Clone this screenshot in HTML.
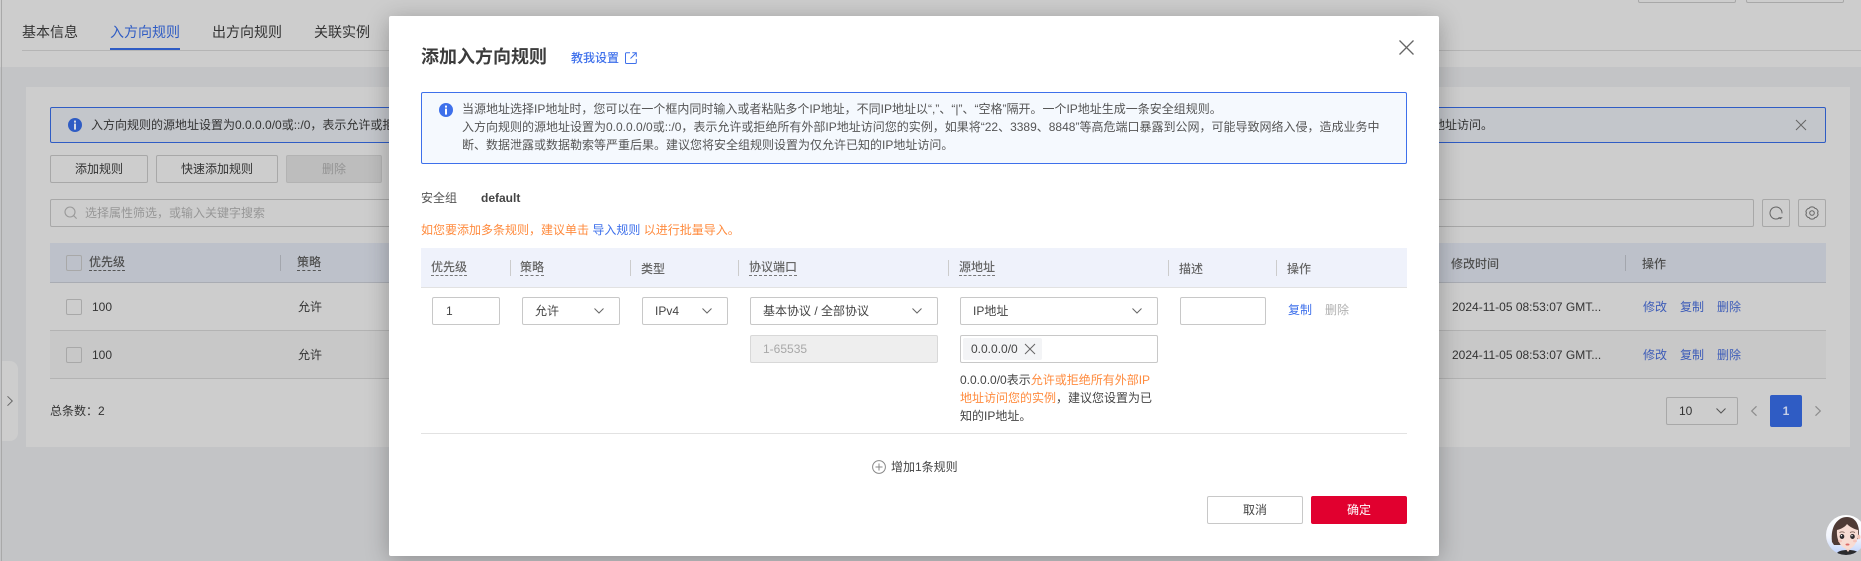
<!DOCTYPE html>
<html lang="zh">
<head>
<meta charset="utf-8">
<title>添加入方向规则</title>
<style>
html,body{margin:0;padding:0;width:1861px;height:561px;overflow:hidden;background:#c3c4c6}
body{position:relative;font:12px/18px "Liberation Sans","Noto Sans CJK SC",sans-serif;color:#333}
.a,.t,.b{position:absolute;box-sizing:border-box}
.t{white-space:nowrap;line-height:18px}
.b{text-align:center;border:1px solid #a8a8a8;border-radius:2px;line-height:26px;color:#333}
.h{font-weight:500;color:#505050}
.u{border-bottom:1px dashed #555;line-height:16px}
.mh{font-weight:500;color:#666}
.mu{border-bottom:1px dashed #777;line-height:16px}
.lk{color:#3d5cb8}
.in{position:absolute;box-sizing:border-box;border:1px solid #c8c8c8;border-radius:2px;background:#fff;height:28px;line-height:26px;color:#444}
.or{color:#ff8b3e}
svg{position:absolute;display:block;overflow:visible}
</style>
</head>
<body>
<!-- page background -->
<div class="a" style="left:0;top:0;width:1861px;height:67px;background:#cdcdcd"></div>
<div class="a" style="left:1px;top:0;width:1px;height:561px;background:#a9a9a9"></div>
<div class="a" style="left:1638px;top:-10px;width:98px;height:13px;border:1px solid #a8a8a8;border-radius:2px"></div>
<div class="a" style="left:1746px;top:-10px;width:98px;height:13px;border:1px solid #a8a8a8;border-radius:2px"></div>
<div class="a" style="left:22px;top:50px;width:1839px;height:1px;background:#b5b5b5"></div>
<div class="t" style="left:22px;top:23px;font-size:14px;color:#333">基本信息</div>
<div class="t" style="left:110px;top:23px;font-size:14px;color:#2f5cc4">入方向规则</div>
<div class="t" style="left:212px;top:23px;font-size:14px;color:#333">出方向规则</div>
<div class="t" style="left:314px;top:23px;font-size:14px;color:#333">关联实例</div>
<div class="a" style="left:110px;top:48px;width:70px;height:2px;background:#2f5cc4"></div>

<!-- card -->
<div class="a" style="left:26px;top:87px;width:1824px;height:360px;background:#cdcdcd"></div>
<div class="a" style="left:50px;top:107px;width:1776px;height:36px;background:#c3c6cb;border:1px solid #2f5cc4;border-radius:2px"></div>
<svg style="left:68px;top:118px" width="14" height="14" viewBox="0 0 14 14"><circle cx="7" cy="7" r="7" fill="#2f5cc4"/><rect x="6" y="2.6" width="2" height="2" fill="#d5d9e4"/><rect x="6" y="5.6" width="2" height="6" fill="#d5d9e4"/></svg>
<div class="t" style="left:91px;top:116px">入方向规则的源地址设置为0.0.0.0/0或::/0，表示允许或拒绝所有外部IP地址访问</div>
<div class="t" style="left:1433px;top:116px">地址访问。</div>
<svg style="left:1796px;top:120px" width="10" height="10" viewBox="0 0 10 10"><path d="M0 0L10 10M10 0L0 10" stroke="#666" stroke-width="1" fill="none"/></svg>

<div class="b" style="left:50px;top:155px;width:98px;height:28px">添加规则</div>
<div class="b" style="left:156px;top:155px;width:122px;height:28px">快速添加规则</div>
<div class="b" style="left:286px;top:155px;width:96px;height:28px;background:#bdbdbd;border-color:#b3b3b3;color:#939393">删除</div>

<div class="a" style="left:50px;top:199px;width:1704px;height:28px;border:1px solid #a8a8a8;border-radius:2px"></div>
<svg style="left:64px;top:206px" width="14" height="14" viewBox="0 0 14 14"><circle cx="6" cy="6" r="5" fill="none" stroke="#999" stroke-width="1.1"/><path d="M9.6 9.6L12.6 12.6" stroke="#999" stroke-width="1.1"/></svg>
<div class="t" style="left:85px;top:204px;color:#979797">选择属性筛选，或输入关键字搜索</div>
<div class="a" style="left:1762px;top:199px;width:28px;height:28px;border:1px solid #a8a8a8;border-radius:2px"></div>
<svg style="left:1769px;top:206px" width="14" height="14" viewBox="0 0 14 14"><path d="M10.9 11.6A6 6 0 1 1 13 7.4" fill="none" stroke="#666" stroke-width="1"/><path d="M9 11.2H13.800L11.400 13.400Z" fill="#666"/></svg>
<div class="a" style="left:1798px;top:199px;width:28px;height:28px;border:1px solid #a8a8a8;border-radius:2px"></div>
<svg style="left:1805px;top:206px" width="14" height="14" viewBox="0 0 14 14"><path d="M5 1.300Q7 .4 9 1.300Q9.800 2.700 11.300 2.700Q12.900 4.300 13.100 5.400Q12.200 7 13.100 8.600Q12.900 9.700 11.300 11.300Q9.800 11.300 9 12.700Q7 13.600 5 12.700Q4.200 11.300 2.700 11.300Q1.100 9.700 .9 8.600Q1.800 7 .9 5.400Q1.100 4.300 2.700 2.700Q4.200 2.700 5 1.300Z" fill="none" stroke="#666" stroke-width="1" stroke-linejoin="round"/><circle cx="7" cy="7" r="2.300" fill="none" stroke="#666"/></svg>

<!-- table -->
<div class="a" style="left:50px;top:243px;width:1776px;height:40px;background:#bdc1ca;border-bottom:1px solid #a9acb3"></div>
<div class="a" style="left:50px;top:331px;width:1776px;height:47px;background:#c8c8c8"></div>
<div class="a" style="left:50px;top:330px;width:1776px;height:1px;background:#b3b3b3"></div>
<div class="a" style="left:50px;top:378px;width:1776px;height:1px;background:#b3b3b3"></div>
<div class="a" style="left:66px;top:255px;width:16px;height:16px;border:1px solid #a8a8a8;border-radius:2px"></div>
<div class="a" style="left:66px;top:299px;width:16px;height:16px;border:1px solid #a8a8a8;border-radius:2px"></div>
<div class="a" style="left:66px;top:347px;width:16px;height:16px;border:1px solid #a8a8a8;border-radius:2px"></div>
<div class="t h u" style="left:89px;top:254px">优先级</div>
<div class="a" style="left:280px;top:255px;width:1px;height:16px;background:#a3a6ad"></div>
<div class="t h u" style="left:297px;top:254px">策略</div>
<div class="t h" style="left:1451px;top:255px">修改时间</div>
<div class="a" style="left:1625px;top:255px;width:1px;height:16px;background:#a3a6ad"></div>
<div class="t h" style="left:1642px;top:255px">操作</div>
<div class="t" style="left:92px;top:298px">100</div>
<div class="t" style="left:298px;top:298px">允许</div>
<div class="t" style="left:1452px;top:298px">2024-11-05 08:53:07 GMT...</div>
<div class="t lk" style="left:1643px;top:298px">修改</div>
<div class="t lk" style="left:1680px;top:298px">复制</div>
<div class="t lk" style="left:1717px;top:298px">删除</div>
<div class="t" style="left:92px;top:346px">100</div>
<div class="t" style="left:298px;top:346px">允许</div>
<div class="t" style="left:1452px;top:346px">2024-11-05 08:53:07 GMT...</div>
<div class="t lk" style="left:1643px;top:346px">修改</div>
<div class="t lk" style="left:1680px;top:346px">复制</div>
<div class="t lk" style="left:1717px;top:346px">删除</div>

<!-- pagination -->
<div class="t" style="left:50px;top:402px">总条数：2</div>
<div class="a" style="left:1666px;top:397px;width:72px;height:28px;border:1px solid #a8a8a8;border-radius:2px"></div>
<div class="t" style="left:1679px;top:402px">10</div>
<svg style="left:1716px;top:408px" width="10" height="6" viewBox="0 0 10 6"><path d="M.5 .5L5 5L9.5 .5" fill="none" stroke="#555" stroke-width="1"/></svg>
<svg style="left:1751px;top:406px" width="6" height="10" viewBox="0 0 6 10"><path d="M5.5 .3L.7 5L5.5 9.7" fill="none" stroke="#8c8c8c" stroke-width="1.2"/></svg>
<div class="a" style="left:1770px;top:395px;width:32px;height:32px;background:#2f5cc4;border-radius:2px;color:#c7cfe6;text-align:center;line-height:32px;font-weight:700">1</div>
<svg style="left:1815px;top:406px" width="6" height="10" viewBox="0 0 6 10"><path d="M.5 .3L5.3 5L.5 9.7" fill="none" stroke="#8c8c8c" stroke-width="1.2"/></svg>

<!-- sidebar toggle -->
<div class="a" style="left:2px;top:361px;width:16px;height:80px;background:#cdcdcd;border-radius:0 8px 8px 0"></div>
<svg style="left:7px;top:396px" width="6" height="10" viewBox="0 0 6 10"><path d="M.5 .3L5.3 5L.5 9.7" fill="none" stroke="#666" stroke-width="1"/></svg>

<!-- avatar -->
<svg style="left:1826px;top:515px" width="40" height="40" viewBox="0 0 40 40">
<defs>
<linearGradient id="g" x1="0" y1="0" x2="0" y2="1"><stop offset="0" stop-color="#fff"/><stop offset=".55" stop-color="#f2f5fd"/><stop offset="1" stop-color="#bcd0fb"/></linearGradient>
<clipPath id="c"><circle cx="20" cy="20" r="20"/></clipPath>
</defs>
<circle cx="20" cy="20" r="20" fill="url(#g)"/>
<g clip-path="url(#c)">
<path d="M10 40C11 36 16 35 22 35S32 36 34 40Z" fill="#2a2a2c"/>
<path d="M19 33H25L22 37Z" fill="#f3cfc4"/>
<path d="M6 27C4 11 12 2 21 2C29 2 33 9 33 18L32 24L14 30H8Z" fill="#4f3b36"/>
<path d="M11 15C15 14 19 12 21 9C24 12 28 14 32 15C33 25 28 34 22 34C16 34 10 26 11 15Z" fill="#f8dcd3"/>
<ellipse cx="16" cy="21.500" rx="2.300" ry="2.500" fill="#2d2a2c"/>
<ellipse cx="26.500" cy="21.500" rx="2.300" ry="2.500" fill="#2d2a2c"/>
<circle cx="15.500" cy="20.700" r=".7" fill="#fff"/>
<circle cx="26" cy="20.700" r=".7" fill="#fff"/>
<path d="M13.500 17.500Q16 16.300 18.500 17.500M24 17.500Q26.500 16.300 29 17.500" fill="none" stroke="#6b5046" stroke-width=".7"/>
<ellipse cx="21.500" cy="29.500" rx="2" ry="1" fill="#dd6a68"/>
<ellipse cx="14" cy="26" rx="2" ry="1.300" fill="#f4b8ae" opacity=".7"/>
<ellipse cx="29" cy="26" rx="2" ry="1.300" fill="#f4b8ae" opacity=".7"/>
<ellipse cx="33" cy="22" rx="1.500" ry="2.200" fill="#f3c6ba"/>
</g>
</svg>

<!-- modal -->
<div class="a" style="left:389px;top:16px;width:1050px;height:540px;background:#fff;border-radius:2px;box-shadow:0 4px 24px rgba(0,0,0,.28)"></div>

<div class="t" style="left:421px;top:48px;font-size:18px;font-weight:700;color:#3c3c3c">添加入方向规则</div>
<div class="t" style="left:571px;top:49px;color:#3e70eb;font-weight:500">教我设置</div>
<svg style="left:625px;top:52px" width="12" height="12" viewBox="0 0 12 12"><path d="M5 .7H1.500A1 1 0 0 0 .5 1.700V10.500A1 1 0 0 0 1.500 11.500H10.300A1 1 0 0 0 11.300 10.500V7M7.300 .7H11.300V4.700M11.300 .7L5.500 6.500" fill="none" stroke="#3e70eb" stroke-width="1"/></svg>
<svg style="left:1399px;top:40px" width="15" height="15" viewBox="0 0 15 15"><path d="M.5 .5L14.500 14.500M14.500 .5L.5 14.500" stroke="#666" stroke-width="1.300" fill="none"/></svg>

<div class="a" style="left:421px;top:92px;width:986px;height:72px;background:#f5f9fe;border:1px solid #3e70eb;border-radius:2px"></div>
<svg style="left:439px;top:103px" width="14" height="14" viewBox="0 0 14 14"><circle cx="7" cy="7" r="7" fill="#3e70eb"/><rect x="6" y="2.600" width="2" height="2" fill="#fff"/><rect x="6" y="5.600" width="2" height="6" fill="#fff"/></svg>
<div class="t" style="left:462px;top:100px;color:#555">当源地址选择IP地址时，您可以在一个框内同时输入或者粘贴多个IP地址，不同IP地址以“,”、“|”、“空格”隔开。一个IP地址生成一条安全组规则。</div>
<div class="t" style="left:462px;top:118px;color:#555">入方向规则的源地址设置为0.0.0.0/0或::/0，表示允许或拒绝所有外部IP地址访问您的实例，如果将“22、3389、8848”等高危端口暴露到公网，可能导致网络入侵，造成业务中</div>
<div class="t" style="left:462px;top:136px;color:#555">断、数据泄露或数据勒索等严重后果。建议您将安全组规则设置为仅允许已知的IP地址访问。</div>

<div class="t" style="left:421px;top:189px;color:#555">安全组</div>
<div class="t" style="left:481px;top:189px;font-weight:700;color:#444">default</div>
<div class="t or" style="left:421px;top:221px">如您要添加多条规则，建议单击 <span style="color:#3e70eb">导入规则</span> 以进行批量导入。</div>

<div class="a" style="left:421px;top:248px;width:986px;height:40px;background:#eff2fb;border-bottom:1px solid #e2e2e2"></div>
<div class="t mh mu" style="left:431px;top:259px">优先级</div>
<div class="a" style="left:510px;top:260px;width:1px;height:16px;background:#ccc"></div>
<div class="t mh mu" style="left:520px;top:259px">策略</div>
<div class="a" style="left:630px;top:260px;width:1px;height:16px;background:#ccc"></div>
<div class="t mh" style="left:641px;top:260px">类型</div>
<div class="a" style="left:738px;top:260px;width:1px;height:16px;background:#ccc"></div>
<div class="t mh mu" style="left:749px;top:259px">协议端口</div>
<div class="a" style="left:948px;top:260px;width:1px;height:16px;background:#ccc"></div>
<div class="t mh mu" style="left:959px;top:259px">源地址</div>
<div class="a" style="left:1168px;top:260px;width:1px;height:16px;background:#ccc"></div>
<div class="t mh" style="left:1179px;top:260px">描述</div>
<div class="a" style="left:1276px;top:260px;width:1px;height:16px;background:#ccc"></div>
<div class="t mh" style="left:1287px;top:260px">操作</div>

<div class="in" style="left:432px;top:297px;width:68px;padding-left:13px">1</div>
<div class="in" style="left:522px;top:297px;width:98px;padding-left:12px">允许</div>
<svg style="left:594px;top:308px" width="10" height="6" viewBox="0 0 10 6"><path d="M.5 .5L5 5L9.500 .5" fill="none" stroke="#666" stroke-width="1"/></svg>
<div class="in" style="left:642px;top:297px;width:86px;padding-left:12px">IPv4</div>
<svg style="left:702px;top:308px" width="10" height="6" viewBox="0 0 10 6"><path d="M.5 .5L5 5L9.500 .5" fill="none" stroke="#666" stroke-width="1"/></svg>
<div class="in" style="left:750px;top:297px;width:188px;padding-left:12px">基本协议 / 全部协议</div>
<svg style="left:912px;top:308px" width="10" height="6" viewBox="0 0 10 6"><path d="M.5 .5L5 5L9.500 .5" fill="none" stroke="#666" stroke-width="1"/></svg>
<div class="in" style="left:750px;top:335px;width:188px;padding-left:12px;background:#eee;border-color:#d8d8d8;color:#a8a8a8">1-65535</div>
<div class="in" style="left:960px;top:297px;width:198px;padding-left:12px">IP地址</div>
<svg style="left:1132px;top:308px" width="10" height="6" viewBox="0 0 10 6"><path d="M.5 .5L5 5L9.500 .5" fill="none" stroke="#666" stroke-width="1"/></svg>
<div class="in" style="left:960px;top:335px;width:198px"></div>
<div class="a" style="left:963px;top:338px;width:79px;height:22px;background:#f3f4f6;border-radius:2px"></div>
<div class="t" style="left:971px;top:340px;color:#444">0.0.0.0/0</div>
<svg style="left:1025px;top:344px" width="10" height="10" viewBox="0 0 10 10"><path d="M0 0L10 10M10 0L0 10" stroke="#666" stroke-width="1" fill="none"/></svg>
<div class="in" style="left:1180px;top:297px;width:86px"></div>
<div class="t" style="left:1288px;top:301px;color:#3e70eb">复制</div>
<div class="t" style="left:1325px;top:301px;color:#b0b0b0">删除</div>
<div class="t" style="left:960px;top:371px;color:#444">0.0.0.0/0表示<span class="or">允许或拒绝所有外部IP</span></div>
<div class="t" style="left:960px;top:389px;color:#444"><span class="or">地址访问您的实例</span>，建议您设置为已</div>
<div class="t" style="left:960px;top:407px;color:#444">知的IP地址。</div>
<div class="a" style="left:421px;top:433px;width:986px;height:1px;background:#e2e2e2"></div>

<svg style="left:872px;top:460px" width="14" height="14" viewBox="0 0 14 14"><circle cx="7" cy="7" r="6.400" fill="none" stroke="#888" stroke-width="1"/><path d="M3.500 7H10.500M7 3.500V10.500" stroke="#888" stroke-width="1" fill="none"/></svg>
<div class="t" style="left:891px;top:458px;color:#444">增加1条规则</div>

<div class="b" style="left:1207px;top:496px;width:96px;height:28px;border-color:#c8c8c8;background:#fff;color:#444">取消</div>
<div class="b" style="left:1311px;top:496px;width:96px;height:28px;border-color:#e1002f;background:#e1002f;color:#fff">确定</div>
</body>
</html>
